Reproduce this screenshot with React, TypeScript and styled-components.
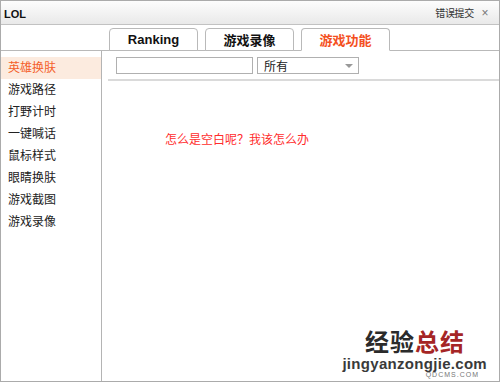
import * as React from 'react';
import styled, { createGlobalStyle } from 'styled-components';
import { FunctionComponent, useState } from 'react';

const GlobalStyle = createGlobalStyle`
	html, body {
		margin: 0;
		padding: 0;
		background: #ffffff;
	}
	body {
		font-family: "Liberation Sans", "Noto Sans CJK SC", sans-serif;
		font-size: 12px;
		color: #222;
	}
`;

const tabs = [ 'Ranking', '游戏录像', '游戏功能' ];
const menu = [ '英雄换肤', '游戏路径', '打野计时', '一键喊话', '鼠标样式', '眼睛换肤', '游戏截图', '游戏录像' ];

const App: FunctionComponent = () => {
	const [ activeTab, setActiveTab ] = useState(2);
	const [ activeMenu, setActiveMenu ] = useState(0);

	return (
		<Wrap>
			<GlobalStyle />
			<TitleBar>
				<div className="title">LOL</div>
				<div className="title-right">
					<span className="report">错误提交</span>
					<span className="close">×</span>
				</div>
			</TitleBar>
			<TabBar>
				{tabs.map((t, i) => (
					<Tab key={t} active={i === activeTab} onClick={() => setActiveTab(i)}>
						{t}
					</Tab>
				))}
			</TabBar>
			<Body>
				<Sidebar>
					{menu.map((m, i) => (
						<MenuItem key={m + i} active={i === activeMenu} onClick={() => setActiveMenu(i)}>
							{m}
						</MenuItem>
					))}
				</Sidebar>
				<Content>
					<Toolbar>
						<SearchInput />
						<Select>
							<span>所有</span>
							<span className="arrow" />
						</Select>
					</Toolbar>
					<Divider />
					<Message>怎么是空白呢？我该怎么办</Message>
				</Content>
			</Body>
			<Watermark>
				<div className="big">
					经验<span className="red">总结</span>
				</div>
				<div className="url">jingyanzongjie.com</div>
				<div className="tiny">QDCMS.COM</div>
			</Watermark>
		</Wrap>
	);
};

export default App;

const Wrap = styled.div`
	position: relative;
	width: 500px;
	height: 382px;
	box-sizing: border-box;
	border: solid 1px #ababab;
	display: flex;
	flex-direction: column;
	background: #ffffff;
	overflow: hidden;
`;

const TitleBar = styled.div`
	height: 23px;
	flex: none;
	display: flex;
	align-items: center;
	justify-content: space-between;
	padding: 0 0 0 3px;
	border-bottom: solid 1px #c2c2c2;
	background: linear-gradient(#fdfdfd, #e9e9e9);
	.title {
		font-weight: bold;
		font-size: 11px;
		color: #111;
		padding-top: 2px;
	}
	.title-right {
		display: flex;
		align-items: center;
		.report {
			font-size: 10px;
			letter-spacing: -0.3px;
			color: #333;
		}
		.close {
			width: 12px;
			text-align: center;
			margin: 0 8px 0 5px;
			font-size: 12px;
			color: #777;
		}
	}
`;

const TabBar = styled.div`
	height: 25px;
	flex: none;
	display: flex;
	align-items: flex-end;
	gap: 7px;
	padding-left: 108px;
	border-bottom: solid 1px #b9b9b9;
`;

const Tab = styled.div<{ active: boolean }>`
	width: 87px;
	height: 21px;
	margin-bottom: -1px;
	display: flex;
	align-items: center;
	justify-content: center;
	border: solid 1px #b9b9b9;
	border-bottom: ${(p) => (p.active ? 'solid 1px #ffffff' : 'solid 1px #b9b9b9')};
	border-radius: 4px 4px 0 0;
	background: #ffffff;
	font-size: 13px;
	font-weight: bold;
	color: ${(p) => (p.active ? '#f4501e' : '#111')};
	cursor: pointer;
`;

const Body = styled.div`
	flex: 1;
	display: flex;
	min-height: 0;
`;

const Sidebar = styled.div`
	width: 100px;
	flex: none;
	border-right: solid 1px #b4b4b4;
	padding-top: 6px;
	display: flex;
	flex-direction: column;
`;

const MenuItem = styled.div<{ active: boolean }>`
	height: 22px;
	line-height: 22px;
	padding-left: 7px;
	font-size: 12px;
	color: ${(p) => (p.active ? '#f4602a' : '#222')};
	background: ${(p) => (p.active ? '#fcebdf' : 'transparent')};
	cursor: pointer;
`;

const Content = styled.div`
	flex: 1;
	display: flex;
	flex-direction: column;
	padding-top: 6px;
`;

const Toolbar = styled.div`
	display: flex;
	gap: 4px;
	padding-left: 14px;
`;

const SearchInput = styled.input`
	width: 137px;
	height: 17px;
	box-sizing: border-box;
	border: solid 1px #b0b0b0;
	padding: 0 3px;
	margin: 0;
	outline: none;
	font-size: 12px;
`;

const Select = styled.div`
	width: 102px;
	height: 17px;
	box-sizing: border-box;
	border: solid 1px #b0b0b0;
	display: flex;
	align-items: center;
	justify-content: space-between;
	padding: 0 5px 0 6px;
	font-size: 12px;
	color: #222;
	.arrow {
		width: 0;
		height: 0;
		border-left: 4px solid transparent;
		border-right: 4px solid transparent;
		border-top: 4px solid #999;
	}
`;

const Divider = styled.div`
	height: 2px;
	margin: 5px 0 0 6px;
	background: #dadada;
`;

const Message = styled.div`
	margin: 49px 0 0 63px;
	font-size: 12px;
	color: #ff2d2d;
`;

const Watermark = styled.div`
	position: absolute;
	right: 12px;
	bottom: 2px;
	display: flex;
	flex-direction: column;
	align-items: flex-end;
	pointer-events: none;
	.big {
		font-size: 24px;
		font-weight: bold;
		letter-spacing: 1px;
		color: #2b2b2b;
		line-height: 26px;
		margin-right: 22px;
		.red {
			color: #a52525;
		}
	}
	.url {
		font-size: 15px;
		font-weight: bold;
		color: #3a3a3a;
		line-height: 15px;
		letter-spacing: 0.3px;
	}
	.tiny {
		font-size: 7px;
		line-height: 8px;
		color: #777;
		letter-spacing: 1px;
		margin-right: 8px;
	}
`;
